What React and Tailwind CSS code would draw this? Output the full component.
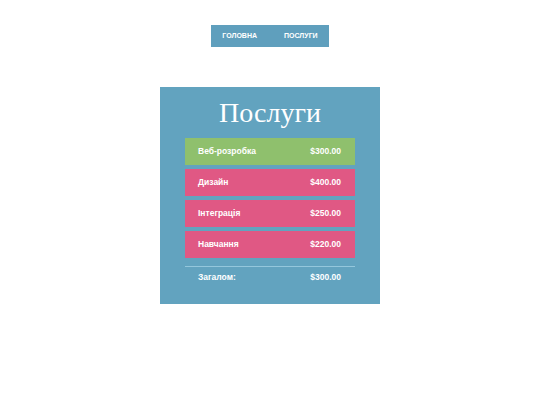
const services = [
  { name: 'Веб-розробка', price: '$300.00', active: true },
  { name: 'Дизайн', price: '$400.00' },
  { name: 'Інтеграція', price: '$250.00' },
  { name: 'Навчання', price: '$220.00' },
];

export default function App() {
  return (
    <div className="w-[540px] h-[405px] bg-white font-['Liberation_Sans',Arial,sans-serif]">
      <div className="flex justify-center pt-[25px]">
        <nav className="flex h-[22px] items-center bg-[#5f9fbd] px-[11px] gap-[27px] text-[7px] font-bold text-white">
          <span>ГОЛОВНА</span>
          <span>ПОСЛУГИ</span>
        </nav>
      </div>

      <div className="mx-auto mt-[40px] w-[220px] bg-[#62a3bf] px-[25px] pt-[8px] pb-[16px]">
        <h1 className="text-center font-['Liberation_Serif',serif] text-[28px] leading-[36px] text-white">
          Послуги
        </h1>
        <ul className="mt-[7px] flex flex-col gap-[4px]">
          {services.map((s) => (
            <li
              key={s.name}
              className={`flex h-[27px] items-center justify-between pl-[13px] pr-[14px] text-[8.5px] font-bold text-white ${
                s.active ? 'bg-[#8fc06d]' : 'bg-[#e05884]'
              }`}
            >
              <span>{s.name}</span>
              <span>{s.price}</span>
            </li>
          ))}
        </ul>
        <div className="mt-[8px] border-t border-[#94c7dc] flex h-[22px] items-center justify-between pl-[13px] pr-[14px] text-[8.5px] font-bold text-white">
          <span>Загалом:</span>
          <span>$300.00</span>
        </div>
      </div>
    </div>
  );
}
